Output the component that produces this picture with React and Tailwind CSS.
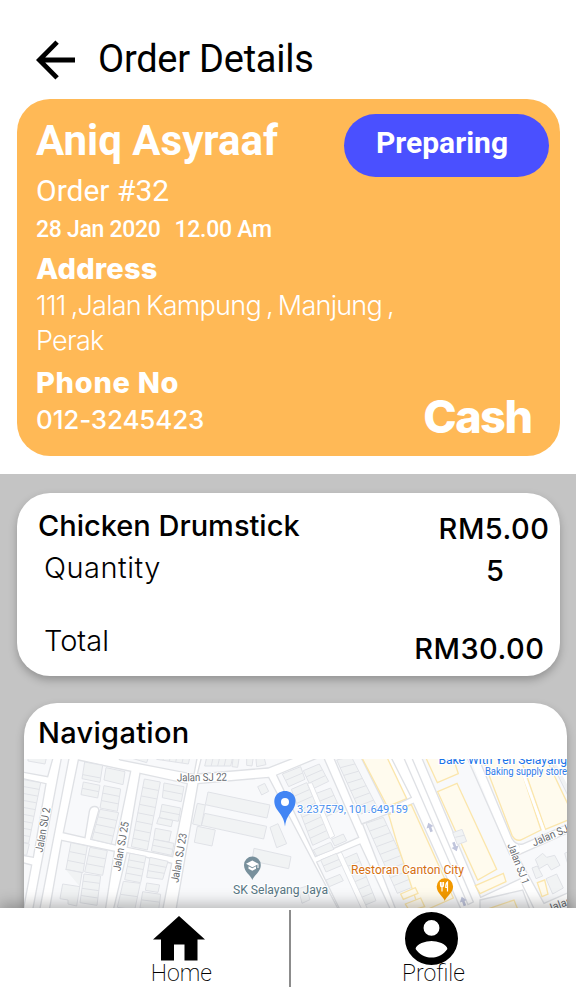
import React from "react";

const display = "font-[Inter,'Liberation_Sans',sans-serif]";

/* A terrace of n plots between the top edge a-b and the bottom edge d-c. */
function Plots({ a, b, c, d, n, fill = "#f1f3f4", stroke = "#e0e2e7" }) {
  const mix = (p, q, t) => [p[0] + (q[0] - p[0]) * t, p[1] + (q[1] - p[1]) * t];
  const rungs = Array.from({ length: n - 1 }, (_, i) => {
    const t = (i + 1) / n;
    return `M${mix(a, d, t)}L${mix(b, c, t)}`;
  }).join("");
  return <path d={`M${a}L${b}L${c}L${d}Z${rungs}`} fill={fill} stroke={stroke} strokeWidth="3" />;
}

const block = { fill: "#f8f9fb", stroke: "#dfe1e5", strokeWidth: 4 };
const house = { fill: "#f1f3f4", stroke: "#e0e2e7", strokeWidth: 3 };
const shop = { fill: "#fffbee", stroke: "#fbe6ac", strokeWidth: 4 };

function WestMap() {
  return (
    <g transform="translate(0 750) scale(.33333)">
      <path {...block} d="M60 20H160L143 80L60 65Z" />
      <path {...house} d="M84 20H140L135 42L84 33Z" />
      <path {...block} d="M60 84L138 101L100 322L60 314Z" />
      <Plots a={[66, 88]} b={[122, 98]} c={[86, 280]} d={[46, 272]} n={9} />
      <path {...house} d="M60 276L88 282L80 316L60 312Z" />
      <path {...block} d="M60 336L95 345L70 480H60Z" />
      <path {...block} d="M185 20H208L119 480H98Z" />
      <path {...block} d="M235 30L392 64L346 285L272 268L296 182C298 166 272 164 268 184L255 263L190 248Z" />
      <Plots a={[254, 36]} b={[308, 46]} c={[300, 97]} d={[246, 86]} n={1} />
      <path {...house} d="M249 74L302 84M318 53L375 65L369 104L312 90Z" />
      <Plots a={[250, 96]} b={[300, 106]} c={[293, 144]} d={[243, 134]} n={2} />
      <Plots a={[312, 107]} b={[362, 117]} c={[352, 184]} d={[300, 174]} n={3} />
      <Plots a={[300, 178]} b={[356, 188]} c={[334, 282]} d={[276, 268]} n={4} />
      <path {...block} d="M185 271L343 304L316 480H148Z" />
      <Plots a={[213, 278]} b={[262, 288]} c={[249, 368]} d={[198, 358]} n={3} />
      <path {...house} d="M196 358L246 368L230 468L204 462V450L180 446L188 402L240 410M188 402Z" />
      <Plots a={[270, 292]} b={[322, 302]} c={[308, 376]} d={[254, 366]} n={3} />
      <Plots a={[252, 372]} b={[302, 378]} c={[291, 466]} d={[240, 458]} n={4} />
      <path {...block} d="M420 70L562 101L518 320L382 292Z" />
      <Plots a={[433, 87]} b={[481, 96]} c={[442, 300]} d={[394, 290]} n={8} />
      <Plots a={[492, 99]} b={[552, 110]} c={[544, 155]} d={[487, 143]} n={2} />
      <Plots a={[486, 163]} b={[542, 174]} c={[535, 214]} d={[478, 203]} n={2} />
      <path {...house} d="M476 203L518 211L514 230L470 221Z" />
      <Plots a={[466, 235]} b={[514, 244]} c={[507, 276]} d={[461, 268]} n={1} />
      <Plots a={[461, 268]} b={[522, 280]} c={[515, 316]} d={[454, 303]} n={2} />
      <path {...block} d="M381 308L515 340L488 480H340Z" />
      <Plots a={[390, 310]} b={[438, 319]} c={[422, 398]} d={[374, 389]} n={4} />
      <Plots a={[370, 394]} b={[421, 400]} c={[404, 480]} d={[352, 472]} n={2} />
      <Plots a={[450, 322]} b={[504, 334]} c={[488, 388]} d={[440, 382]} n={3} />
      <path {...house} d="M440 399L479 405L474 427L436 421Z" />
      <Plots a={[428, 425]} b={[482, 433]} c={[476, 480]} d={[420, 474]} n={2} />
      <path {...block} d="M352 20L360 30L582 73L592 20Z" />
      <Plots a={[570, 20]} b={[565, 42]} c={[470, 28]} d={[474, 10]} n={5} />
      <path {...house} d="M380 20L440 38L446 20" />
    </g>
  );
}

function CentreMap() {
  return (
    <g transform="translate(190 750) scale(.33333)">
      <path {...block} d="M35 20L22 72L234 54L322 20Z" />
      <Plots a={[52, 14]} b={[44, 48]} c={[122, 48]} d={[130, 14]} n={4} />
      <path {...house} d="M130 20L126 50L143 52L148 20M170 20V46L186 48L190 20M198 26L222 22L228 44L200 50Z" />
      <path {...block} d="M24 101L236 82L446 480H-42Z" />
      <path {...house} d="M54 126L240 165L231 204L46 164ZM22 160L46 165L34 228L8 222ZM44 190L230 229L221 267L34 226ZM22 229L76 240L66 288L13 277ZM203 110L224 100L236 124L215 135ZM240 232L264 221L290 281L260 293ZM192 295L303 320L296 356L186 333ZM325 416L348 409L360 449L336 460Z" />
      <path {...block} d="M260 75L378 26L400 20L506 262L376 320Z" />
      <Plots a={[277, 72]} b={[332, 50]} c={[345, 88]} d={[296, 110]} n={2} />
      <Plots a={[304, 118]} b={[350, 98]} c={[424, 260]} d={[368, 286]} n={8} />
      <Plots a={[340, 62]} b={[388, 42]} c={[416, 94]} d={[366, 118]} n={3} />
      <Plots a={[374, 132]} b={[422, 114]} c={[452, 180]} d={[400, 204]} n={3} />
      <path d="M352 100L366 98L434 258L420 266Z" fill="#fff" stroke="#e2e4e8" strokeWidth="3" />
      <path {...house} d="M424 268L460 252L470 272L434 288ZM370 300L422 277L432 298L380 318Z" />
      <path {...block} d="M430 20H512L598 192L515 222Z" />
      <Plots a={[440, 30]} b={[484, 20]} c={[562, 172]} d={[514, 192]} n={7} />
      <path {...block} d="M380 336L510 282L602 480H450Z" />
      <Plots a={[392, 330]} b={[440, 310]} c={[456, 346]} d={[408, 366]} n={2} />
      <path {...house} d="M408 390L450 373L460 392L418 410Z" />
      <Plots a={[457, 328]} b={[500, 309]} c={[558, 452]} d={[514, 470]} n={6} />
      <path d="M440 312L454 306L534 480H516Z" fill="#fff" stroke="#e2e4e8" strokeWidth="3" />
    </g>
  );
}

function Arrow({ x, y, r }) {
  return (
    <path transform={`translate(${x} ${y}) rotate(${r})`} d="M0-15L11 0H4V14H-4V0H-11Z" fill="#c0c5dc" />
  );
}

function EastMap() {
  return (
    <g transform="translate(376 740) scale(.33333)">
      <path {...shop} d="M-44 50H32L92 176L34 200Z" />
      <path {...block} fill="none" d="M44 50L106 172L38 204" />
      <path {...block} d="M-40 252L112 190L256 510H60Z" />
      <Plots a={[-30, 250]} b={[22, 232]} c={[118, 438]} d={[64, 460]} n={9} />
      <path {...shop} d="M38 224L106 194L232 474L150 510H130L62 306Z" />
      <path {...shop} d="M74 462L118 443L126 460L82 478ZM88 492L134 474L146 500L100 512Z" />
      <path {...block} d="M82 50H106L292 486L276 494Z" fill="#fff" />
      <path {...block} d="M136 50H308L428 316L434 416L314 472Z" />
      <path {...shop} d="M148 50H230L247 101L184 128ZM185 155L243 130L362 388L305 420ZM298 437L382 400L390 425L312 461Z" />
      <path {...house} d="M230 278L258 268L272 304L244 314ZM238 292L264 286" />
      <path d="M310 50L434 330L508 510H476L404 350L280 50Z" fill="#fff" />
      <path d="M272 50L402 346M434 424L476 510" fill="none" stroke="#dfe1e5" strokeWidth="4" />
      <path {...block} d="M306 50H590V246L440 312Q420 316 408 296Z" />
      <path {...shop} d="M318 50H422L495 270L434 300Q418 304 408 286Z" />
      <path {...shop} d="M432 50H508L582 206V238L508 268Z" />
      <path d="M422 50L504 272" stroke="#fff" strokeWidth="8" />
      <path {...house} d="M518 50H590V196Z" />
      <path d="M538 50L590 150" stroke="#fff" strokeWidth="14" />
      <path {...block} d="M424 346L590 272V452L504 490Z" />
      <path {...house} d="M478 358L500 340L512 352L536 346L552 376L526 390L514 372L490 386ZM468 384L484 378L500 408L480 416ZM510 416L542 402L562 444L530 462ZM566 340L590 328V368H574Z" />
      <path {...shop} d="M484 428L506 420L516 462L498 470Z" />
      <path {...block} d="M312 480L440 450L462 510H312Z" />
      <path {...shop} d="M338 506L414 480L426 510Z" />
      <path {...block} d="M530 506L590 476V510Z" />
      <Arrow x={162} y={262} r={-20} />
      <Arrow x={237} y={320} r={160} />
      <Arrow x={262} y={484} r={-20} />
    </g>
  );
}

function Road({ x, y, r, w, children }) {
  return (
    <text
      transform={`translate(${x} ${y}) rotate(${r})`}
      textAnchor="middle"
      textLength={w}
      lengthAdjust="spacingAndGlyphs"
      fontSize="11"
      fill="#65696e"
      stroke="#fff"
      strokeWidth="2"
      paintOrder="stroke"
    >
      {children}
    </text>
  );
}

function Place({ x, y, w, size = 11.5, fill, children }) {
  return (
    <text x={x} y={y} textLength={w} lengthAdjust="spacingAndGlyphs" fontSize={size} fill={fill}
      stroke="#fff" strokeWidth="2" paintOrder="stroke">
      {children}
    </text>
  );
}

function Map() {
  return (
    <svg viewBox="24 759 543 149" className="block h-[149px] w-[543px] font-[Roboto,sans-serif]">
      <rect x="24" y="759" width="543" height="149" fill="#fff" />
      <WestMap />
      <CentreMap />
      <EastMap />
      <Road x={46.500} y={830.5} r={-80} w={45}>Jalan SU 2</Road>
      <Road x={124.500} y={847} r={-80} w={50}>Jalan SJ 25</Road>
      <Road x={182.500} y={858.5} r={-80} w={50}>Jalan SJ 23</Road>
      <Road x={202} y={781} r={-1} w={50}>Jalan SJ 22</Road>
      <Road x={515} y={865} r={69} w={43}>Jalan SJ 1</Road>
      <Road x={556} y={837} r={-23} w={48}>Jalan SJ/2</Road>
      <Road x={572} y={904} r={-20} w={50}>Jalan SJ 1</Road>
      <path d="M285 826.5C284 818 281 815 277 809.5C271 800 276 791 285 791S299 800 293 809.5C289 815 286 818 285 826.5Z" fill="#4285f4" />
      <circle cx="285" cy="802" r="4" fill="#fff" />
      <Place x={297} y={812.5} w={111} size={11} fill="#4a90ee">3.237579, 101.649159</Place>
      <path d="M252.300 880C251 875.500 244 872 244 865A8.400 8.400 0 0 1 260.800 865C260.800 872 253.600 875.500 252.300 880Z" fill="#78909c" />
      <path d="M252.300 860.500L258.500 863.800V868H257.500V864.600L252.300 867.300L246 863.800ZM248.500 866.300L252.300 868.300L256 866.300V868.800L252.300 870.800L248.500 868.800Z" fill="#fff" />
      <Place x={233} y={893.5} w={95} size={12} fill="#587784">SK Selayang Jaya</Place>
      <Place x={351} y={874} w={113} size={12} fill="#d56f10">Restoran Canton City</Place>
      <path d="M444.800 901C443.500 896.500 436.700 893 436.700 886.500A8.200 8.200 0 0 1 453.100 886.500C453.100 893 446 896.500 444.800 901Z" fill="#f29900" />
      <path d="M440.500 882V885Q440.500 887 442 887V891.500M442 882V887M443.500 882V885Q443.500 887 442 887M447.500 891.500V882Q445.500 883.500 445.800 887.500H447.500" fill="none" stroke="#fff" strokeWidth="1.200" />
      <Place x={438.500} y={763.5} w={128.500} size={12} fill="#1a73e8">Bake With Yen Selayang</Place>
      <Place x={485} y={774.5} w={82} size={10} fill="#2f7ae8">Baking supply store</Place>
    </svg>
  );
}

function OrderCard() {
  return (
    <section className="ml-[16.5px] flex h-[357px] w-[543px] justify-between rounded-[33px] bg-[#ffb956] pt-[15px] pr-[11px] pl-[19.5px] text-white">
      <div className="flex w-[300px] flex-col whitespace-nowrap">
        <h2 className="h-[53px] text-[42px] leading-[53px] font-bold">Aniq Asyraaf</h2>
        <p className="h-[46px] text-[30px] leading-[47px]">Order #32</p>
        <p className="flex h-[34px] gap-[14px] text-[23px] leading-[33px] font-medium tracking-[-0.3px]">
          <span>28 Jan 2020</span>
          <span>12.00 Am</span>
        </p>
        <h3 className={`${display} h-[41px] text-[29px] leading-[43px] font-extrabold tracking-[0.15px]`}>Address</h3>
        <p className={`${display} w-[370px] text-[27px] leading-[35px] font-light tracking-[-0.75px] [word-spacing:-1.800px]`}>
          111 ,Jalan Kampung , Manjung ,<br />Perak
        </p>
        <h3 className={`${display} mt-1.5 h-[37px] text-[29px] leading-[37px] font-extrabold tracking-[0.7px]`}>Phone No</h3>
        <p className={`${display} text-[26px] leading-[38px] font-medium tracking-[-0.15px]`}>012-3245423</p>
      </div>
      <div className="flex flex-col items-end justify-between">
        <div className="flex h-[63px] w-[205px] items-center justify-center rounded-full bg-[#4a50ff] pr-2 pb-1.5 text-[30px] leading-none font-bold">
          Preparing
        </div>
        <div className={`${display} mr-[17px] mb-[11px] text-[45px] leading-[56px] font-extrabold tracking-[-1.500px]`}>Cash</div>
      </div>
    </section>
  );
}

function ItemCard() {
  return (
    <section className={`${display} ml-[16.5px] flex h-[183px] w-[543px] justify-between rounded-[33px] bg-white pt-[13px] pr-[10px] pl-[21.5px] text-[29px] shadow-[0_4px_8px_rgba(0,0,0,.25)]`}>
      <div className="flex flex-col">
        <h3 className="leading-[40px] font-medium">Chicken Drumstick</h3>
        <p className="ml-1.5 leading-[44px] font-light tracking-[0.5px]">Quantity</p>
        <p className="mt-[31px] ml-1.5 leading-[40px] font-light">Total</p>
      </div>
      <div className="flex flex-col items-end font-medium tracking-[0.5px]">
        <p className="leading-[45px]">RM5.00</p>
        <p className="mr-[45px] leading-[40px]">5</p>
        <p className="mt-[37px] mr-[5px] leading-[42px]">RM30.00</p>
      </div>
    </section>
  );
}

function NavCard() {
  return (
    <section className="mt-[27px] ml-6 w-[543px] overflow-hidden rounded-t-[33px] bg-white shadow-[0_4px_8px_rgba(0,0,0,.25)]">
      <h3 className={`${display} h-[56px] pl-3.5 text-[29px] leading-[60px] font-medium tracking-[0.3px]`}>Navigation</h3>
      <Map />
    </section>
  );
}

function Tab({ icon, label, className }) {
  return (
    <button className={`flex flex-col items-center ${className}`}>
      {icon}
      <span className="text-[23px] leading-[26px] font-extralight">{label}</span>
    </button>
  );
}

export default function App() {
  return (
    <main className="flex h-[987px] w-[576px] flex-col overflow-hidden bg-white font-[Roboto,sans-serif] text-black">
      <header className="flex h-[99px] shrink-0 items-center gap-[22px] pt-[21px] pl-9">
        <svg viewBox="0 0 40 40" className="h-10 w-10">
          <path d="M39 17.600V22.400H9.200L22.800 36.200L19.400 39.500L0 20L19.400 .500L22.800 3.800L9.200 17.600Z" fill="#000" />
        </svg>
        <h1 className="-mt-[2px] text-[38px] leading-none tracking-[-0.25px]">Order Details</h1>
      </header>
      <OrderCard />
      <div className="mt-[18px] h-[434px] shrink-0 overflow-hidden bg-[#c4c4c4] pt-[19px]">
        <ItemCard />
        <NavCard />
      </div>
      <nav className="relative flex h-[79px] shrink-0 bg-white shadow-[0_-4px_14px_rgba(0,0,0,.27)]">
        <div className="flex w-[289px] justify-end">
          <Tab
            className="mr-[77px] pt-[8px]"
            label="Home"
            icon={
              <svg viewBox="0 0 52 45" className="mr-[5px] h-[45px] w-[52px]">
                <path d="M26 0L52 23.500H44.500V44.500H31.500V28.500H21V44.500H8V23.500H0Z" fill="#000" />
              </svg>
            }
          />
        </div>
        <div className="mt-0.5 w-0.5 bg-[#8c8c8c]" />
        <div className="flex flex-1 justify-center">
          <Tab
            className="pt-[4px]"
            label="Profile"
            icon={
              <svg viewBox="2 2 20 20" className="mr-1 -mb-1 h-[53px] w-[53px]">
                <path d="M12 2a10 10 0 1 0 0 20 10 10 0 0 0 0-20zm0 3a3 3 0 1 1 0 6 3 3 0 0 1 0-6zm0 14.200c-2.500 0-4.710-1.280-6-3.220.03-1.990 4-3.080 6-3.080s5.970 1.090 6 3.080c-1.290 1.940-3.500 3.220-6 3.220z" fill="#000" />
              </svg>
            }
          />
        </div>
      </nav>
    </main>
  );
}
